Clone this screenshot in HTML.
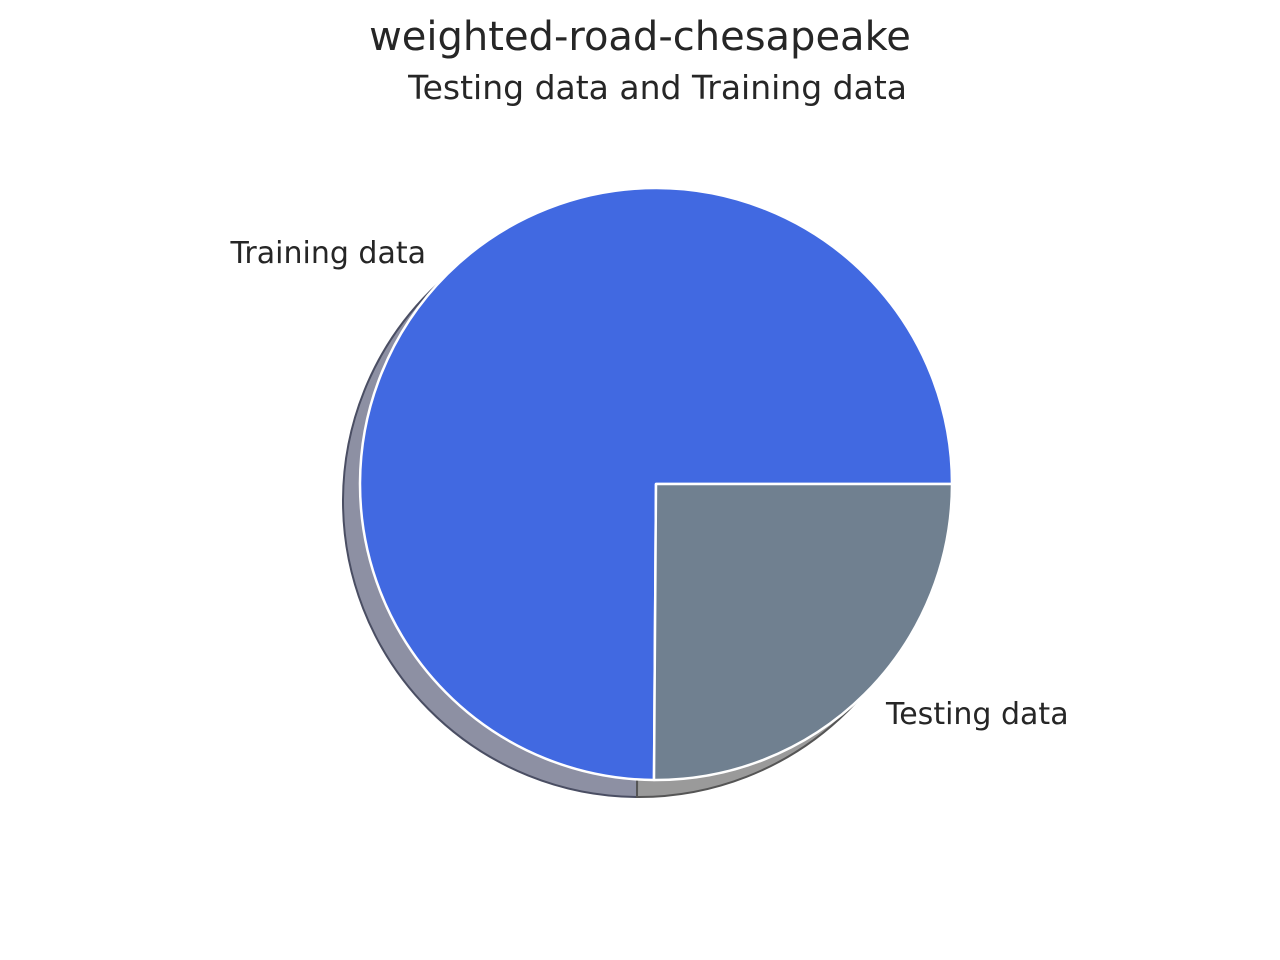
<!DOCTYPE html>
<html><head><meta charset="utf-8"><style>
html,body{margin:0;padding:0;background:#fff;}
svg{display:block;}
text{font-family:"DejaVu Sans","Liberation Sans",sans-serif;fill:#262626;}
</style></head><body>
<svg width="1280" height="960" viewBox="0 0 1280 960">
<rect width="1280" height="960" fill="#fff"/>
<text x="640" y="50" font-size="40" text-anchor="middle">weighted-road-chesapeake</text>
<text x="907" y="99" font-size="33" text-anchor="end">Testing data and Training data</text>
<g transform="translate(-17,17)">
<path d="M656,484 L952,484 A296,296 0 1,0 654,780 Z" fill="#8d90a3" stroke="#4a4e63" stroke-width="2"/>
<path d="M656,484 L654,780 A296,296 0 0,0 952,484 Z" fill="#9a9a9a" stroke="#555" stroke-width="2"/>
</g>
<path d="M656,484 L952,484 A296,296 0 1,0 654,780 Z" fill="#4169e1" stroke="#fff" stroke-width="2.5" stroke-linejoin="round"/>
<path d="M656,484 L654,780 A296,296 0 0,0 952,484 Z" fill="#708090" stroke="#fff" stroke-width="2.5" stroke-linejoin="round"/>
<text x="426" y="263" font-size="30" text-anchor="end">Training data</text>
<text x="886" y="724" font-size="30">Testing data</text>
</svg>
</body></html>
